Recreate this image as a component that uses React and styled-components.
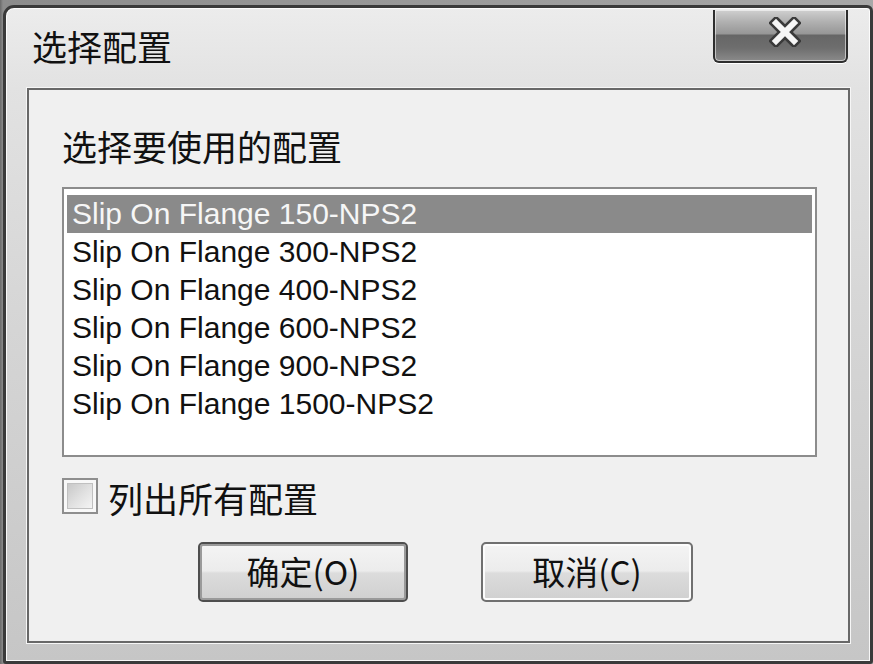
import React from "react";
import styled, { createGlobalStyle } from "styled-components";

const GlobalStyle = createGlobalStyle`
  html, body {
    margin: 0;
    padding: 0;
    overflow: hidden;
    background: #8f8f8f;
  }
`;

const CJK = `"Noto Sans CJK SC", "Noto Sans", sans-serif`;

const Screen = styled.div`
  width: 873px;
  height: 664px;
  box-sizing: border-box;
  padding: 5px 0 0 3px;
  background: linear-gradient(90deg, #6a6a6a 0, #8c8c8c 3px, #a8a8a8 100%);
`;

const Window = styled.div`
  width: 100%;
  height: 100%;
  box-sizing: border-box;
  border: 3px solid #3a3a3a;
  border-radius: 11px 6px 3px 3px;
  background: linear-gradient(180deg, #ececec 0, #e2e2e2 80px, #d6d6d6 300px, #c6c6c6 100%);
  box-shadow: inset 0 0 0 1px rgba(255, 255, 255, 0.85);
  display: flex;
  flex-direction: column;
`;

const TitleBar = styled.div`
  height: 80px;
  flex: none;
  display: flex;
  align-items: flex-start;
  justify-content: space-between;
  padding: 0 22px 0 26px;
`;

const Title = styled.div`
  margin-top: 18px;
  font-family: ${CJK};
  font-size: 35px;
  line-height: 40px;
  color: #111;
`;

const CloseButton = styled.div`
  margin-top: 2px;
  width: 135px;
  height: 53px;
  box-sizing: border-box;
  border: 2px solid #2e2e2e;
  border-top: none;
  border-radius: 0 0 6px 6px;
  background: linear-gradient(
    180deg,
    #d0d0d0 0,
    #b0b0b0 12px,
    #969696 24px,
    #666666 25px,
    #6e6e6e 38px,
    #8a8a8a 100%
  );
  box-shadow: inset 0 0 0 1px rgba(255, 255, 255, 0.55), 0 1px 0 #ffffff;
  display: flex;
  justify-content: center;
  align-items: flex-start;
  padding: 7px 0 0 8px;
`;

const Client = styled.div`
  flex: 1;
  margin: 0 20px 18px 21px;
  border: 2px solid #686868;
  background: #f0f0f0;
  box-shadow: 0 0 0 1px #f6f6f6;
  display: flex;
  flex-direction: column;
  padding: 0 31px 0 33px;
`;

const Label = styled.div`
  margin-top: 36px;
  font-family: ${CJK};
  font-size: 35px;
  line-height: 40px;
  color: #111;
`;

const ListBox = styled.div`
  margin-top: 21px;
  height: 270px;
  box-sizing: border-box;
  border: 2px solid #8c8c8c;
  background: #ffffff;
  padding: 6px 3px;
  display: flex;
  flex-direction: column;
`;

const Row = styled.div`
  height: 38px;
  flex: none;
  display: flex;
  align-items: center;
  padding-left: 5px;
  font-family: "Liberation Sans", Arial, sans-serif;
  font-size: 30px;
  color: ${(p) => (p.selected ? "#f6f6f6" : "#111")};
  background: ${(p) => (p.selected ? "#8a8a8a" : "transparent")};
`;

const CheckRow = styled.div`
  margin-top: 21px;
  height: 36px;
  display: flex;
  align-items: center;
  gap: 10px;
`;

const CheckBox = styled.div`
  width: 36px;
  height: 36px;
  box-sizing: border-box;
  border: 2px solid #8e8e8e;
  background: #f8f8f8;
  padding: 3px;
  display: flex;

  &::after {
    content: "";
    flex: 1;
    border: 1px solid #c0c0c0;
    background: linear-gradient(135deg, #c8c8c8 0, #e2e2e2 55%, #f4f4f4 100%);
  }
`;

const CheckLabel = styled.div`
  font-family: ${CJK};
  font-size: 35px;
  line-height: 40px;
  color: #111;
  margin-top: 4px;
`;

const ButtonRow = styled.div`
  margin-top: 28px;
  display: flex;
  gap: 73px;
  padding-left: 136px;
`;

const Button = styled.div`
  width: ${(p) => (p.wide ? "212px" : "210px")};
  height: 60px;
  box-sizing: border-box;
  border: 2px solid ${(p) => (p.primary ? "#4e4e4e" : "#707070")};
  border-radius: 5px;
  background: linear-gradient(180deg, #f4f4f4 0, #ececec 48%, #dcdcdc 52%, #d0d0d0 100%);
  box-shadow: inset 0 0 0 ${(p) => (p.primary ? "2px #9a9a9a" : "2px #fcfcfc")};
  display: flex;
  justify-content: center;
  align-items: center;
  font-family: ${CJK};
  font-size: 33px;
  color: #111;
  padding-bottom: 2px;
`;

const items = [
  "Slip On Flange 150-NPS2",
  "Slip On Flange 300-NPS2",
  "Slip On Flange 400-NPS2",
  "Slip On Flange 600-NPS2",
  "Slip On Flange 900-NPS2",
  "Slip On Flange 1500-NPS2",
];

// chunky white X with a dark outline, like the Win7 caption glyph
const CloseIcon = () => (
  <svg width="32" height="30" viewBox="0 0 32 30">
    <path d="M7 6 L25 24 M25 6 L7 24" stroke="#3a3a3a" strokeWidth="11" strokeLinecap="square" />
    <path d="M7 6 L25 24 M25 6 L7 24" stroke="#f6f6f6" strokeWidth="6" strokeLinecap="square" />
  </svg>
);

export default function App() {
  return (
    <Screen>
      <GlobalStyle />
      <Window>
        <TitleBar>
          <Title>选择配置</Title>
          <CloseButton>
            <CloseIcon />
          </CloseButton>
        </TitleBar>
        <Client>
          <Label>选择要使用的配置</Label>
          <ListBox>
            {items.map((it, i) => (
              <Row key={it} selected={i === 0}>
                {it}
              </Row>
            ))}
          </ListBox>
          <CheckRow>
            <CheckBox />
            <CheckLabel>列出所有配置</CheckLabel>
          </CheckRow>
          <ButtonRow>
            <Button primary>确定(O)</Button>
            <Button wide>取消(C)</Button>
          </ButtonRow>
        </Client>
      </Window>
    </Screen>
  );
}
